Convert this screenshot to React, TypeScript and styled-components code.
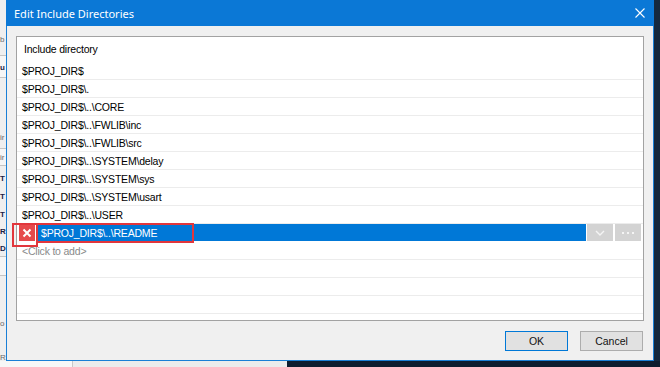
import React from 'react';
import styled, { createGlobalStyle } from 'styled-components';

const GlobalStyle = createGlobalStyle`
    html, body {
        margin: 0;
        padding: 0;
        background: #11233a;
    }
    body {
        width: 660px;
        height: 367px;
        overflow: hidden;
        font-family: "Liberation Sans", Arial, sans-serif;
    }
`;

const Desktop = styled.div`
    width: 660px;
    height: 367px;
    display: flex;
    flex-direction: column;
    overflow: hidden;
    background: #0f2035;
`;
const Upper = styled.div`
    display: flex;
    height: 361px;
`;
const BackWindow = styled.div`
    width: 6px;
    flex-shrink: 0;
    background: #efefef;
    overflow: hidden;
    display: flex;
    flex-direction: column;
`;
const BackItem = styled.div<{ $h: number; $bold?: boolean; $line?: boolean }>`
    height: ${(p) => p.$h}px;
    line-height: ${(p) => p.$h}px;
    flex-shrink: 0;
    font-size: 8px;
    white-space: nowrap;
    color: ${(p) => (p.$bold ? '#1c2244' : '#6a6a6a')};
    font-weight: ${(p) => (p.$bold ? 700 : 400)};
    background: ${(p) => (p.$line ? '#f6f6f6' : 'transparent')};
    border-top: ${(p) => (p.$line ? '1px solid #c4c4c4' : 'none')};
    border-bottom: ${(p) => (p.$line ? '1px solid #c4c4c4' : 'none')};
    box-sizing: border-box;
`;
const RightStrip = styled.div`
    flex: 1;
    background: #15283d;
`;
const BottomStrip = styled.div`
    display: flex;
    height: 6px;
`;
const BottomLight = styled.div`
    width: 287px;
    display: flex;
    background: #ececec;
`;
const BottomCell = styled.div<{ $w: number }>`
    width: ${(p) => p.$w}px;
    border-right: 1px solid #c8c8c8;
    background: #f7f7f7;
`;
const BottomDark = styled.div`
    flex: 1;
    background: #0e1d2f;
`;

const Dialog = styled.div`
    width: 648px;
    flex-shrink: 0;
    box-sizing: border-box;
    border: 1px solid #1a7fd6;
    border-top: none;
    background: #f0f0f0;
    display: flex;
    flex-direction: column;
`;
const TitleBar = styled.div`
    height: 26px;
    background: #0b78d6;
    margin: 0 -1px;
    display: flex;
    align-items: center;
    padding: 0 9px 0 8px;
    color: #ffffff;
    font-family: "Noto Sans", "Liberation Sans", sans-serif;
    font-size: 11px;
`;
const Title = styled.div`
    flex: 1;
`;
const CloseIcon = styled.svg`
    width: 10px;
    height: 10px;
    margin-bottom: 1px;
`;
const Body = styled.div`
    padding: 10px 9px 9px 9px;
    display: flex;
    flex-direction: column;
`;
const ListBox = styled.div`
    height: 285px;
    box-sizing: border-box;
    border: 1px solid #a2a2a2;
    background: #ffffff;
    display: flex;
    flex-direction: column;
    font-size: 10.5px;
    letter-spacing: -0.2px;
    color: #000000;
`;
const Header = styled.div`
    height: 25px;
    line-height: 25px;
    padding-left: 7px;
    flex-shrink: 0;
`;
const Row = styled.div<{ $hint?: boolean }>`
    height: 18px;
    flex-shrink: 0;
    box-sizing: border-box;
    border-bottom: 1px solid #ececec;
    padding-left: 5px;
    display: flex;
    align-items: center;
    color: ${(p) => (p.$hint ? '#8a8a8a' : '#000000')};
`;
const SelectedRow = styled.div`
    height: 18px;
    flex-shrink: 0;
    position: relative;
    display: flex;
    align-items: flex-start;
    padding-right: 2px;
`;
const DeleteCell = styled.div`
    width: 21px;
    height: 17px;
    display: flex;
    align-items: center;
    padding-left: 2px;
    box-sizing: border-box;
`;
const DeleteButton = styled.div`
    width: 16px;
    height: 16px;
    background: #e64a4c;
    display: flex;
    align-items: center;
    justify-content: center;
`;
const EditField = styled.div`
    flex: 1;
    height: 17px;
    background: #0078d7;
    color: #ffffff;
    padding-left: 3px;
    display: flex;
    align-items: center;
`;
const SideButton = styled.div<{ $gap: number }>`
    width: 26px;
    height: 17px;
    margin-left: ${(p) => p.$gap}px;
    background: #d3d3d3;
    display: flex;
    align-items: center;
    justify-content: center;
`;
const Mark = styled.div<{ $left: number; $top: number; $w: number; $h: number }>`
    position: absolute;
    left: ${(p) => p.$left}px;
    top: ${(p) => p.$top}px;
    width: ${(p) => p.$w}px;
    height: ${(p) => p.$h}px;
    box-sizing: border-box;
    border: 2px solid #e2363c;
    pointer-events: none;
`;
const Footer = styled.div`
    margin-top: 10px;
    display: flex;
    justify-content: flex-end;
    gap: 12px;
    padding-right: 1px;
`;
const Button = styled.div<{ $default?: boolean }>`
    width: 63px;
    height: 20px;
    box-sizing: border-box;
    border: 1px solid ${(p) => (p.$default ? '#0078d7' : '#adadad')};
    background: #e1e1e1;
    display: flex;
    align-items: center;
    justify-content: center;
    font-size: 10.5px;
    color: #111111;
`;

const paths = [
    '$PROJ_DIR$',
    '$PROJ_DIR$\\.',
    '$PROJ_DIR$\\..\\CORE',
    '$PROJ_DIR$\\..\\FWLIB\\inc',
    '$PROJ_DIR$\\..\\FWLIB\\src',
    '$PROJ_DIR$\\..\\SYSTEM\\delay',
    '$PROJ_DIR$\\..\\SYSTEM\\sys',
    '$PROJ_DIR$\\..\\SYSTEM\\usart',
    '$PROJ_DIR$\\..\\USER',
];

// slice of the window behind the dialog, only its left edge shows
const backItems: { h: number; t?: string; bold?: boolean; line?: boolean }[] = [
    { h: 33 },
    { h: 14, t: 'b' },
    { h: 8 },
    { h: 23, t: 'u', bold: true, line: true },
    { h: 52 },
    { h: 15, t: 'ir' },
    { h: 3 },
    { h: 18, t: 'ir', line: true },
    { h: 3 },
    { h: 19, t: 'T', bold: true },
    { h: 18, t: 'T', bold: true },
    { h: 17, t: 'T', bold: true },
    { h: 18, t: 'R', bold: true },
    { h: 15, t: 'D', bold: true },
    { h: 20, line: true },
    { h: 40 },
    { h: 16, t: 'o' },
    { h: 19 },
    { h: 14, t: 'R' },
];

export default function App() {
    return (
        <Desktop>
            <GlobalStyle />
            <Upper>
                <BackWindow>
                    {backItems.map((b, i) => (
                        <BackItem key={i} $h={b.h} $bold={b.bold} $line={b.line}>
                            {b.t}
                        </BackItem>
                    ))}
                </BackWindow>
                <Dialog>
                    <TitleBar>
                        <Title>Edit Include Directories</Title>
                        <CloseIcon viewBox="0 0 10 10">
                            <path d="M0.5 0.5 L9.5 9.5 M9.5 0.5 L0.5 9.5" stroke="#ffffff" strokeWidth="1.1" />
                        </CloseIcon>
                    </TitleBar>
                    <Body>
                        <ListBox>
                            <Header>Include directory</Header>
                            {paths.map((p) => (
                                <Row key={p}>{p}</Row>
                            ))}
                            <SelectedRow>
                                <DeleteCell>
                                    <DeleteButton>
                                        <svg width="10" height="10" viewBox="0 0 10 10">
                                            <path d="M1.5 1.5 L8.5 8.5 M8.5 1.5 L1.5 8.5" stroke="#ffffff" strokeWidth="2" />
                                        </svg>
                                    </DeleteButton>
                                </DeleteCell>
                                <EditField>$PROJ_DIR$\..\README</EditField>
                                <SideButton $gap={1}>
                                    <svg width="10" height="6" viewBox="0 0 10 6">
                                        <path d="M1 1 L5 5 L9 1" stroke="#f4f4f4" strokeWidth="1.4" fill="none" />
                                    </svg>
                                </SideButton>
                                <SideButton $gap={2}>
                                    <svg width="14" height="4" viewBox="0 0 14 4">
                                        <rect x="1" y="1" width="2" height="2" fill="#f4f4f4" />
                                        <rect x="6" y="1" width="2" height="2" fill="#f4f4f4" />
                                        <rect x="11" y="1" width="2" height="2" fill="#f4f4f4" />
                                    </svg>
                                </SideButton>
                                <Mark $left={-5} $top={-1} $w={26} $h={24} />
                                <Mark $left={19} $top={-1} $w={158} $h={20} />
                            </SelectedRow>
                            <Row $hint>&lt;Click to add&gt;</Row>
                            <Row />
                            <Row />
                            <Row />
                        </ListBox>
                        <Footer>
                            <Button $default>OK</Button>
                            <Button>Cancel</Button>
                        </Footer>
                    </Body>
                </Dialog>
                <RightStrip />
            </Upper>
            <BottomStrip>
                <BottomLight>
                    <BottomCell $w={72} />
                </BottomLight>
                <BottomDark />
            </BottomStrip>
        </Desktop>
    );
}
